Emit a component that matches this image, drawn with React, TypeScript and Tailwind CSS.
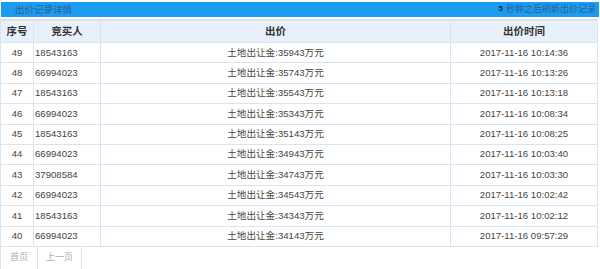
const rows = [
  { no: 49, user: '18543163', price: '35943', time: '2017-11-16 10:14:36' },
  { no: 48, user: '66994023', price: '35743', time: '2017-11-16 10:13:26' },
  { no: 47, user: '18543163', price: '35543', time: '2017-11-16 10:13:18' },
  { no: 46, user: '66994023', price: '35343', time: '2017-11-16 10:08:34' },
  { no: 45, user: '18543163', price: '35143', time: '2017-11-16 10:08:25' },
  { no: 44, user: '66994023', price: '34943', time: '2017-11-16 10:03:40' },
  { no: 43, user: '37908584', price: '34743', time: '2017-11-16 10:03:30' },
  { no: 42, user: '66994023', price: '34543', time: '2017-11-16 10:02:42' },
  { no: 41, user: '18543163', price: '34343', time: '2017-11-16 10:02:12' },
  { no: 40, user: '66994023', price: '34143', time: '2017-11-16 09:57:29' },
];

export default function App() {
  return (
    <div
      className="w-[600px] h-[269px] bg-white text-[#444] overflow-hidden"
      style={{ fontFamily: '"Liberation Sans", "Noto Sans CJK SC", sans-serif' }}
    >
      <div className="pt-[2px] px-[1px]">
        <div className="flex items-center justify-between h-[15px] bg-[#1b9cf0] pl-[14px] pr-[3px]">
          <span className="text-[9.5px] leading-none text-[#2f5f92]">出价记录详情</span>
          <span className="text-[9px] leading-none text-[#2f5f92]">
            <b className="text-[#1a2a3a] text-[8px] align-top mr-[3px]">5</b>秒钟之后刷新出价记录
          </span>
        </div>
      </div>

      <div className="mt-[2px] border-t border-[#f3d9c0] w-[598px]">
        <table className="w-[598px] border-collapse table-fixed text-[9.6px]">
          <colgroup>
            <col className="w-[33px]" />
            <col className="w-[67px]" />
            <col className="w-[350px]" />
            <col />
          </colgroup>
          <thead>
            <tr className="h-[22px] bg-[#e8f1fb]">
              <th className="border border-[#d6e4f4] font-bold text-[10.5px] text-[#333]">序号</th>
              <th className="border border-[#d6e4f4] font-bold text-[10.5px] text-[#333]">竞买人</th>
              <th className="border border-[#d6e4f4] font-bold text-[10.5px] text-[#333]">出价</th>
              <th className="border border-[#d6e4f4] font-bold text-[10.5px] text-[#333]">出价时间</th>
            </tr>
          </thead>
          <tbody>
            {rows.map((r) => (
              <tr key={r.no} className="h-[20.4px]">
                <td className="border border-[#d6e4f4] text-center">{r.no}</td>
                <td className="border border-[#d6e4f4] pl-[1px]">{r.user}</td>
                <td className="border border-[#d6e4f4] text-center">土地出让金:{r.price}万元</td>
                <td className="border border-[#d6e4f4] text-center">{r.time}</td>
              </tr>
            ))}
          </tbody>
        </table>
      </div>

      <div className="flex">
        <button className="h-[23px] w-[38px] border border-t-0 border-[#e3e3e3] text-[9px] text-[#aaa]">首页</button>
        <button className="h-[23px] w-[44px] border border-t-0 border-l-0 border-[#e3e3e3] text-[9px] text-[#aaa]">上一页</button>
      </div>
    </div>
  );
}
